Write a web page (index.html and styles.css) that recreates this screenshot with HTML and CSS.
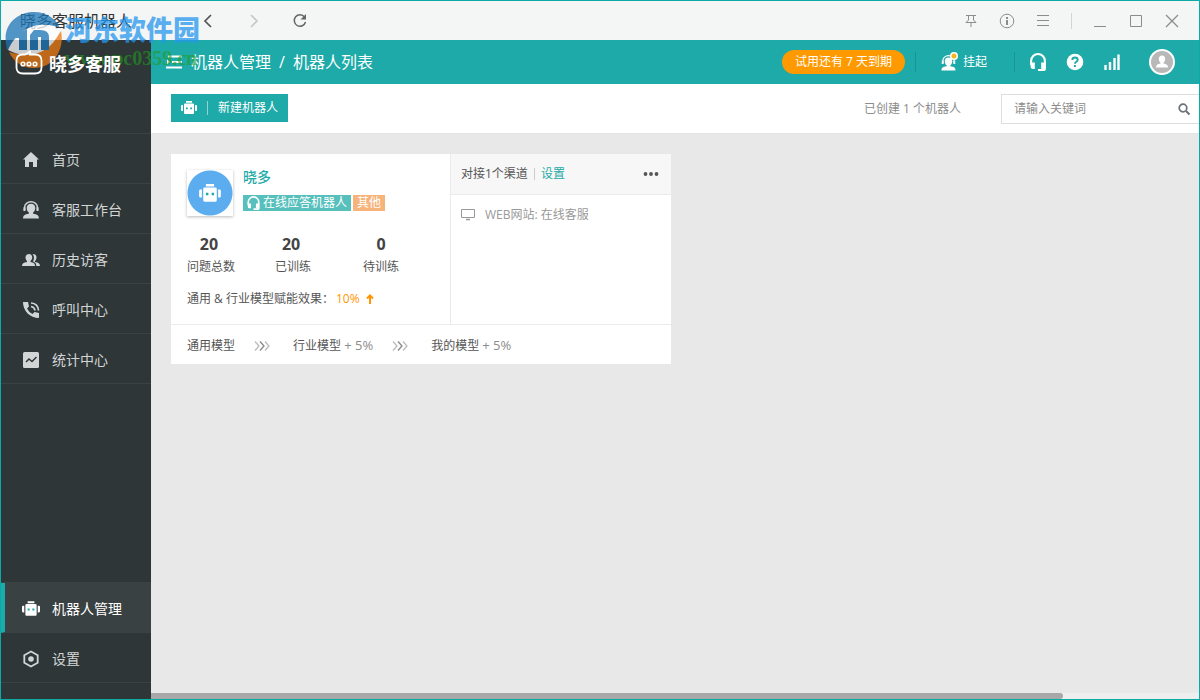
FILE: index.html
```html
<!DOCTYPE html>
<html lang="zh-CN">
<head>
<meta charset="utf-8">
<title>晓多客服机器人</title>
<link rel="stylesheet" href="styles.css">
</head>
<body>
<svg class="sprite" aria-hidden="true">
  <symbol id="robot" viewBox="0 0 16 14"><path fill="currentColor" d="M5 0h6v1.800H5zM4 2.600h8q1 0 1 1V12q0 1-1 1H4q-1 0-1-1V3.600q0-1 1-1zM0 5q0-1 1-1h1v6H1q-1 0-1-1zM14 4h1q1 0 1 1v4q0 1-1 1h-1z"/><path class="robot-eyes" d="M5 6.500h1.800v1.800H5zM9.200 6.500H11v1.800H9.200z"/></symbol>
  <symbol id="headset" viewBox="0 0 16 17"><path fill="none" stroke="currentColor" stroke-width="2" d="M1.500 11V7.500a6.500 6.500 0 0 1 13 0V15q0 1-1 1H8"/><path fill="currentColor" d="M1 9h4v6H3q-2 0-2-2zM11 9h4v6h-4z"/></symbol>
  <symbol id="agent" viewBox="0 0 16 17"><path fill="none" stroke="currentColor" stroke-width="1.300" d="M2 8.500V6a6 5.300 0 0 1 12 0v2.500"/><path fill="currentColor" d="M.8 6h2v3.500h-2zM13.200 6h2v3.500h-2zM8 2.500c2.700 0 4 1.800 4 4S11 10 10 10.800V12c4 .6 5.500 1.400 5.500 4.500H.5C.5 13.400 2 12.600 6 12v-1.200C5 10 4 9 4 6.500s1.300-4 4-4z"/></symbol>
</svg>

<div class="window">
  <header class="titlebar">
    <h1 class="app-name">晓多客服机器人</h1>
    <div class="history">
      <button aria-label="后退"><svg width="16" height="16" viewBox="0 0 16 16"><path d="M11 2 5 8l6 6" fill="none" stroke="#555" stroke-width="1.700"/></svg></button>
      <button aria-label="前进" disabled><svg width="16" height="16" viewBox="0 0 16 16"><path d="m5 2 6 6-6 6" fill="none" stroke="#c8c8c8" stroke-width="1.700"/></svg></button>
      <button aria-label="刷新"><svg width="16" height="16" viewBox="0 0 16 16"><path d="M12.500 4A5.700 5.700 0 1 0 13.500 9" fill="none" stroke="#666" stroke-width="1.500"/><path d="M14 1v5.500H8.500z" fill="#666"/></svg></button>
    </div>
    <div class="window-tools">
      <button aria-label="置顶"><svg width="16" height="16" viewBox="0 0 16 16"><path d="M3 2.500h10M5.500 3v4L3 9.500h10L10.500 7V3M8 9.500V14" fill="none" stroke="#8c8c8c"/></svg></button>
      <button aria-label="信息"><svg width="16" height="16" viewBox="0 0 16 16"><circle cx="8" cy="8" r="6.800" fill="none" stroke="#8c8c8c"/><path d="M7 4h2v2H7zM7 7h2v5H7z" fill="#8c8c8c"/></svg></button>
      <button aria-label="菜单"><svg width="16" height="16" viewBox="0 0 16 16"><path d="M2 2.500h12M2 7.500h12M2 12.500h12" stroke="#8c8c8c"/></svg></button>
      <span class="tool-divider"></span>
      <button aria-label="最小化"><svg width="16" height="16" viewBox="0 0 16 16"><path d="M2 13.500h12" stroke="#8c8c8c"/></svg></button>
      <button aria-label="最大化"><svg width="16" height="16" viewBox="0 0 16 16"><path d="M2.500 2.500h11v11h-11z" fill="none" stroke="#8c8c8c"/></svg></button>
      <button aria-label="关闭"><svg width="16" height="16" viewBox="0 0 16 16"><path d="m2 2 12 12M14 2 2 14" stroke="#8c8c8c" stroke-width="1.300"/></svg></button>
    </div>
  </header>

  <div class="workspace">
    <aside class="sidebar">
      <div class="brand">
        <svg width="28" height="26" viewBox="0 0 28 26"><path d="M8 4.500h2l5-3v3h5q6.500 0 6.500 6v7q0 6-6.500 6H8q-6.500 0-6.500-6v-7q0-6 6.500-6z" fill="none" stroke="#fff" stroke-width="1.800"/><g fill="none" stroke="#fff" stroke-width="1.600"><circle cx="8" cy="14" r="1.800"/><circle cx="14" cy="14" r="1.800"/><circle cx="20" cy="14" r="1.800"/></g></svg>
        <strong>晓多客服</strong>
      </div>
      <nav class="nav nav-main">
        <a href="#"><svg width="18" height="18" viewBox="0 0 18 18"><path fill="currentColor" d="m9 1 8 7.500h-2V16h-4v-5H7v5H3V8.500H1z"/></svg>首页</a>
        <a href="#"><svg width="18" height="18"><use href="#agent"/></svg>客服工作台</a>
        <a href="#"><svg width="18" height="18" viewBox="0 0 18 18"><path fill="currentColor" d="M7 3c2 0 3.200 1.400 3.200 3.400S9 9.500 8.500 10v1c3.500.7 4.500 1.500 4.500 4H0c0-2.500 1.500-3.300 5-4v-1C4.500 9.500 3.500 8.400 3.500 6.400S5 3 7 3zM10.500 3c3 0 4 1.500 4 3.400S13.500 9.500 13 10v1c3.500.7 5 1.500 5 4h-3.700c0-2.500-1-3.800-3.300-4.500 1-1.600 1.700-5-.5-7.500z"/></svg>历史访客</a>
        <a href="#"><svg width="18" height="18" viewBox="0 0 18 18"><path fill="currentColor" d="M1 1h5l1 4.500-2 2q1.600 3.500 5.500 5.500l2-2L17 12v5C8 17 1 10 1 1z"/><path fill="none" stroke="currentColor" stroke-width="1.700" d="M9 2q7 .5 7.500 7.500M9 5.500q3.500.5 4 4"/></svg>呼叫中心</a>
        <a href="#"><svg width="18" height="18" viewBox="0 0 18 18"><rect x="1" y="1" width="16" height="16" rx="1.500" fill="currentColor"/><path d="m4 11 3-3 3 2.500L14.500 6" fill="none" stroke="#2e3638" stroke-width="1.500"/></svg>统计中心</a>
      </nav>
      <nav class="nav nav-foot">
        <a href="#" class="active" aria-current="page"><svg width="18" height="16"><use href="#robot"/></svg>机器人管理</a>
        <a href="#"><svg width="18" height="18" viewBox="0 0 18 18"><path d="m9 1.500 6.700 3.700v7.600L9 16.500l-6.700-3.700V5.200z" fill="none" stroke="currentColor" stroke-width="1.800"/><circle cx="9" cy="9" r="2.800" fill="currentColor"/></svg>设置</a>
      </nav>
    </aside>

    <div class="main">
      <div class="topbar">
        <button class="fold" aria-label="收起菜单"><svg width="18" height="18" viewBox="0 0 18 18"><path d="M3 3.500h14M7 9h10M1 14.500h16" stroke="#fff" stroke-width="1.800"/><path d="M2 6.500v5L5 9z" fill="#fff"/></svg></button>
        <div class="crumbs"><span>机器人管理</span><span>/</span><span>机器人列表</span></div>
        <button class="trial">试用还有 7 天到期</button>
        <span class="bar-divider"></span>
        <button class="status"><svg width="18" height="20" viewBox="0 0 18 20"><use href="#agent" y="3" width="15" height="16"/><circle cx="13" cy="4" r="4" fill="#fff"/><circle cx="13" cy="4" r="2.500" fill="#f7b51c"/></svg>挂起</button>
        <span class="bar-divider"></span>
        <div class="bar-icons">
          <button aria-label="客服"><svg width="18" height="18"><use href="#headset"/></svg></button>
          <button aria-label="帮助"><svg width="18" height="18" viewBox="0 0 18 18"><circle cx="9" cy="9" r="8.300" fill="#fff"/><path d="M6.300 7q0-2.500 2.700-2.500T11.700 7Q11.700 8 10 9q-1 .6-1 1.800M9 12v2" fill="none" stroke="#1eaaa8" stroke-width="1.900"/></svg></button>
          <button aria-label="信号"><svg width="18" height="18" viewBox="0 0 18 18"><path d="M2.500 12v5M7 9v8M11.500 5v12M15.500 1.500V17" stroke="#fff" stroke-width="2.400"/></svg></button>
        </div>
        <button class="avatar" aria-label="账户"><svg width="26" height="26" viewBox="0 0 26 26"><circle cx="13" cy="13" r="12" fill="#b8b8b8" stroke="#fff" stroke-width="2"/><path fill="#fff" d="M13 6.500c2 0 3.200 1.500 3.200 3.400S15.200 13 14.500 13.600v1c3 .5 4.500 1.400 4.500 3.900H7c0-2.500 1.500-3.400 4.500-3.900v-1c-.7-.6-1.700-1.800-1.700-3.700S11 6.500 13 6.500z"/></svg></button>
      </div>

      <div class="toolbar">
        <button class="create"><svg width="16" height="14"><use href="#robot"/></svg><span>新建机器人</span></button>
        <span class="count">已创建 1 个机器人</span>
        <form class="search">
          <input type="text" placeholder="请输入关键词" aria-label="请输入关键词">
          <button type="button" aria-label="搜索"><svg width="14" height="14" viewBox="0 0 14 14"><circle cx="6" cy="6" r="3.800" fill="none" stroke="#6a7278" stroke-width="1.700"/><path d="m9 9 3.500 3.500" stroke="#6a7278" stroke-width="2"/></svg></button>
        </form>
      </div>

      <main class="content">
        <article class="card">
          <section class="summary">
            <div class="profile">
              <div class="robot-avatar"><svg width="22" height="19"><use href="#robot"/></svg></div>
              <div>
                <h2>晓多</h2>
                <div class="tags">
                  <span class="tag tag-online"><svg width="13" height="14"><use href="#headset"/></svg>在线应答机器人</span>
                  <span class="tag tag-other">其他</span>
                </div>
              </div>
            </div>
            <dl class="stats">
              <div><dd>20</dd><dt>问题总数</dt></div>
              <div><dd>20</dd><dt>已训练</dt></div>
              <div><dd>0</dd><dt>待训练</dt></div>
            </dl>
            <p class="effect">通用 &amp; 行业模型赋能效果：<b>10%</b><svg width="8" height="10" viewBox="0 0 8 10"><path d="M4 1v9M1 4.500l3-3 3 3" fill="none" stroke="#ff9600" stroke-width="2"/></svg></p>
          </section>
          <section class="channels">
            <header><span>对接1个渠道</span><i></i><a href="#">设置</a><button aria-label="更多"><svg width="16" height="4" viewBox="0 0 16 4"><g fill="#555"><circle cx="2.500" cy="2" r="1.900"/><circle cx="8" cy="2" r="1.900"/><circle cx="13.500" cy="2" r="1.900"/></g></svg></button></header>
            <p><svg width="14" height="14" viewBox="0 0 14 14"><path d="M.5 1.500h13v8H.5z" fill="none" stroke="#999"/><path d="M5 11.500h4" stroke="#999" stroke-width="1.500"/></svg>WEB网站: 在线客服</p>
          </section>
          <footer class="models">
            <span>通用模型</span>
            <svg width="16" height="10" viewBox="0 0 16 10"><path d="m1 .5 4 4.500-4 4.500M11 .5 15 5l-4 4.500" fill="none" stroke="#bbb" stroke-width="1.300"/><path d="m6 .5 4 4.500-4 4.500" fill="none" stroke="#888" stroke-width="1.300"/></svg>
            <span>行业模型 <em>+ 5%</em></span>
            <svg width="16" height="10" viewBox="0 0 16 10"><path d="m1 .5 4 4.500-4 4.500M11 .5 15 5l-4 4.500" fill="none" stroke="#bbb" stroke-width="1.300"/><path d="m6 .5 4 4.500-4 4.500" fill="none" stroke="#888" stroke-width="1.300"/></svg>
            <span>我的模型 <em>+ 5%</em></span>
          </footer>
        </article>
      </main>
      <div class="scroll-track"><div class="scroll-thumb"></div></div>
    </div>
  </div>

  <div class="watermark">
    <svg width="60" height="60" viewBox="0 0 60 60"><path fill="#1b75b8" d="M1 32C-2 14 12 1 29 1c13 0 22 7 26 16C43 11 22 14 7 35l-5 4z"/><path fill="#ee7a11" d="M56 20c4 19-8 37-27 37C17 57 8 50 4 41c19 6 40-1 52-21z"/><path fill="#fff" d="M3 39C14 14 40 8 55 19 49 38 27 52 3 39z"/><path fill="#1b75b8" d="M14 22l8-4v21h-8V27h-4zM29 19h6q9 0 9 7v13h-8V26h-3v13h-8V24z"/></svg>
    <div><strong>河东软件园</strong><span>www.pc0359.cn</span></div>
  </div>
</div>
</body>
</html>
```
FILE: styles.css
```css
* { box-sizing: border-box; }
body {
  margin: 0;
  font: 12px/16px "Open Sans", "Noto Sans CJK SC", sans-serif;
  color: #555;
}
h1, h2, p, dl, dd { margin: 0; font-weight: normal; }
svg { display: block; flex: none; }
a { color: inherit; text-decoration: none; }
button { padding: 0; border: 0; background: none; color: inherit; font: inherit; }
.sprite { position: absolute; width: 0; height: 0; }
.robot-eyes { fill: #1eaaa8; }

.window {
  position: relative;
  display: flex;
  flex-direction: column;
  height: 100vh;
  border: 1px solid #0caaa6;
  background: #e8e8e8;
}
.titlebar {
  display: flex;
  align-items: center;
  height: 39px;
  padding: 0 19px;
  background: #f4f5f5;
}
.app-name { font-size: 16px; line-height: 24px; color: #333; }
.history { display: flex; gap: 30px; margin-left: 68px; }
.window-tools { display: flex; align-items: center; gap: 20px; margin-left: auto; }
.tool-divider { width: 1px; height: 16px; background: #d4d4d4; }

.workspace { display: flex; flex: 1; min-height: 0; }
.sidebar {
  display: flex;
  flex-direction: column;
  width: 150px;
  flex: none;
  padding-bottom: 16px;
  background: #2e3638;
}
.brand {
  position: relative;
  z-index: 2;
  display: flex;
  align-items: flex-start;
  gap: 6px;
  height: 93px;
  padding: 10px 14px 0;
  color: #fff;
}
.brand strong { font-size: 18px; line-height: 28px; }
.nav { color: #d2d5d5; font-size: 14px; }
.nav a {
  display: flex;
  align-items: center;
  gap: 12px;
  height: 50px;
  padding: 2px 21px 0;
  border-bottom: 1px solid #3a4244;
}
.nav-main, .nav-foot { border-top: 1px solid #3a4244; }
.nav-foot { margin-top: auto; }
.nav .active { padding-left: 17px; border-left: 4px solid #1eaaa8; background: #3a4143; color: #fff; }
.nav .robot-eyes { fill: #3a4143; }

.main { display: flex; flex: 1; flex-direction: column; min-width: 0; }
.topbar { display: flex; align-items: center; height: 44px; padding: 0 24px 0 14px; background: #1eaaa8; color: #fff; }
.crumbs { display: flex; gap: 8px; margin-left: 8px; font-size: 16px; line-height: 24px; }
.trial { height: 24px; margin-left: auto; padding: 0 13px; border-radius: 12px; background: #ff9900; line-height: 24px; }
.bar-divider { width: 1px; height: 20px; margin-left: 10px; background: #199593; }
.status { display: flex; align-items: center; gap: 4px; margin: 0 17px 0 25px; }
.bar-icons { display: flex; gap: 19px; margin-left: 14px; }
.avatar { margin-left: 28px; }

.toolbar { display: flex; align-items: flex-start; height: 50px; padding: 10px 0 0 20px; background: #fff; border-bottom: 1px solid #e4e4e4; }
.create { display: flex; align-items: center; gap: 10px; height: 28px; padding: 0 10px; background: #1eaaa8; color: #fff; }
.create span { padding-left: 10px; border-left: 1px solid #8ed4d3; line-height: 14px; }
.count { margin-left: auto; color: #8c8c8c; line-height: 30px; }
.search { display: flex; align-items: center; width: 198px; height: 30px; margin-left: 40px; border: 1px solid #dedede; border-right: 0; }
.search input { flex: 1; min-width: 0; padding: 0 12px; border: 0; background: none; font: inherit; outline: 0; }
.search input::placeholder { color: #8c8c8c; opacity: 1; }
.search button { padding-right: 8px; }

.content { flex: 1; padding: 20px; }
.card { display: grid; grid-template-columns: 280px 220px; width: 500px; background: #fff; }
.summary { height: 170px; padding: 16px; border-right: 1px solid #ebebeb; }
.profile { display: flex; gap: 10px; }
.robot-avatar { display: grid; place-items: center; width: 46px; height: 46px; background: radial-gradient(circle, #5badf0 22px, #fff 23px); box-shadow: 0 1px 3px #bbb; color: #fff; }
.robot-avatar .robot-eyes { fill: #5badf0; }
.profile h2 { font-size: 14px; font-weight: 500; line-height: 14px; color: #1eaaa8; }
.tags { display: flex; gap: 2px; margin-top: 11px; }
.tag { display: flex; align-items: center; gap: 3px; height: 16px; padding: 0 4px; color: #fff; }
.tag-online { background: #57c0bc; }
.tag-other { background: #f6b37a; }
.stats { display: flex; margin-top: 18px; text-align: center; gap: 40px; }
.stats div:last-child { margin-left: 12px; }
.stats dd { padding-right: 4px; color: #444; font-size: 16px; font-weight: bold; line-height: 20px; }
.stats div:last-child dd { padding-right: 0; }
.stats dt { margin-top: 5px; }
.effect { display: flex; align-items: center; margin-top: 16px; }
.effect b { margin: 0 6px 0 2px; color: #ff9600; font-weight: normal; }
.channels header { display: flex; align-items: center; height: 41px; padding: 0 12px 0 10px; border-bottom: 1px solid #ebebeb; background: #f7f7f7; }
.channels i { width: 1px; height: 12px; margin: 0 6px; background: #ccc; }
.channels a { color: #1eaaa8; }
.channels header button { margin-left: auto; }
.channels p { display: flex; align-items: center; gap: 10px; padding: 12px 10px; color: #999; }
.models { display: flex; grid-column: 1 / -1; align-items: center; height: 40px; padding: 2px 16px 0; border-top: 1px solid #ebebeb; }
.models svg { margin: 0 23px 0 19px; }
.models em { color: #8c8c8c; font-size: 13px; font-style: normal; }

.scroll-track { height: 6px; background: #eee; }
.scroll-thumb { width: 87%; height: 6px; border-radius: 0 3px 3px 0; background: #a8a8a8; }

.watermark { position: absolute; top: 10px; left: 4px; display: flex; opacity: 0.75; pointer-events: none; }
.watermark strong { display: block; color: #2497ee; font: 900 27px/36px "Noto Sans CJK SC", sans-serif; }
.watermark span { display: block; color: #229c22; font: bold 20px/22px "Liberation Serif", serif; opacity: 0.8; }
```
